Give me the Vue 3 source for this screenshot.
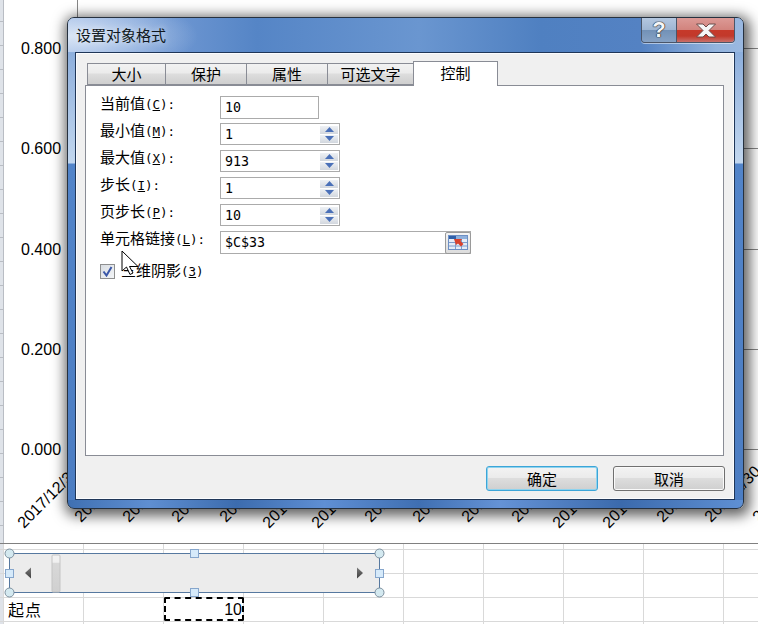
<template>
  <div class="page">
    <div class="chart">
      <div class="axis"></div>
      <template v-for="tick in ticks" :key="tick.text">
        <span class="y-label" :style="{ top: tick.y - 8 + 'px' }">{{ tick.text }}</span>
        <i class="grid-stub" :style="{ top: tick.y + 'px' }"></i>
      </template>
      <span
        v-for="item in dates"
        :key="item.x"
        class="x-label"
        :style="{ left: item.x + 8 + 'px', top: item.y - 13 + 'px' }"
      >{{ item.text }}</span>

      <div class="window">
        <div class="titlebar">
          <span class="title">设置对象格式</span>
          <div class="caption">
            <span class="help">?</span>
            <span class="close">
              <svg width="24" height="15" viewBox="0 0 24 15">
                <path d="M2.500 1h6.500l3 3 3-3h6.500l-6.500 6.500 6.500 6.500h-6.500l-3-3-3 3H2.500l6.500-6.500z" fill="#f6f6f6" stroke="#6b4a48" stroke-width="1" />
              </svg>
            </span>
          </div>
        </div>

        <div class="client">
          <div class="tabs">
            <div
              v-for="tab in tabs"
              :key="tab.name"
              class="tab"
              :class="{ active: tab.active }"
              :style="{ width: tab.width + 'px' }"
            >{{ tab.name }}</div>
          </div>

          <div class="panel">
            <div v-for="row in rows" :key="row.name" class="row">
              <span class="label">{{ row.name }}<span class="latin">(<u>{{ row.key }}</u>):</span></span>
              <div class="input" :class="row.kind">
                <span class="value">{{ row.value }}</span>
                <div v-if="row.kind === 'spin'" class="spinner">
                  <span class="spin-btn">
                    <svg width="9" height="5" viewBox="0 0 9 5"><path d="M4.500 0L9 5H0z" fill="#4a70b8" /></svg>
                  </span>
                  <span class="spin-btn">
                    <svg width="9" height="5" viewBox="0 0 9 5"><path d="M0 0h9L4.500 5z" fill="#4a70b8" /></svg>
                  </span>
                </div>
                <span v-if="row.kind === 'link'" class="picker">
                  <svg width="20" height="15" viewBox="0 0 20 15">
                    <rect x="0.500" y="0.500" width="19" height="14" fill="#e4ecf7" stroke="#6d8fc4" />
                    <rect x="1" y="1" width="7" height="3" fill="#2f5fa8" />
                    <rect x="8" y="1" width="11" height="3" fill="#8fb0dc" />
                    <path d="M1 7.500h18M1 11h18M7.500 4v10M13.500 4v10" stroke="#7d9ccb" fill="none" />
                    <path d="M6 4l8 0-1.500 2 3 3-2.500 2.500-3-3-2 1.500z" fill="#d8412c" />
                  </svg>
                </span>
              </div>
            </div>

            <div class="check-row">
              <span class="checkbox">
                <svg width="11" height="11" viewBox="0 0 11 11">
                  <path d="M1.500 5.500l3 4L9.500 1" fill="none" stroke="#3a57a8" stroke-width="2" />
                </svg>
              </span>
              <span class="label">三维阴影<span class="latin">(<u>3</u>)</span></span>
            </div>
          </div>

          <div class="footer">
            <button class="btn default">确定</button>
            <button class="btn">取消</button>
          </div>
        </div>
      </div>

      <svg class="cursor" width="20" height="26" viewBox="0 0 20 26">
        <path d="M1 1v20l4.500-4 3.500 7.500 3-1.500-3.500-6.500h8.500z" fill="#fff" stroke="#000" />
      </svg>
    </div>

    <div class="sheet">
      <svg class="scroll-object" width="390" height="56" viewBox="0 0 390 56">
        <rect x="9.500" y="9.500" width="370" height="39" fill="#ececec" stroke="#56789f" />
        <rect x="52" y="11" width="8" height="37" rx="1" fill="url(#thumb)" stroke="#c4c4c4" />
        <defs>
          <linearGradient id="thumb" x1="0" y1="0" x2="0" y2="1">
            <stop offset="0" stop-color="#f2f2f2" />
            <stop offset="0.200" stop-color="#f0f0f0" />
            <stop offset="0.210" stop-color="#d8d8d8" />
            <stop offset="1" stop-color="#d0d0d0" />
          </linearGradient>
          <linearGradient id="arrow" x1="0" y1="0" x2="0" y2="1">
            <stop offset="0" stop-color="#7a7a7a" />
            <stop offset="1" stop-color="#3f3f3f" />
          </linearGradient>
        </defs>
        <path d="M25 29l6-5.500v11z" fill="url(#arrow)" />
        <path d="M363 29l-6-5.500v11z" fill="url(#arrow)" />
        <g fill="#d4e9f0" stroke="#7c8f9e">
          <circle cx="9.500" cy="9.500" r="4.500" />
          <circle cx="379.500" cy="9.500" r="4.500" />
          <circle cx="9.500" cy="48.500" r="4.500" />
          <circle cx="379.500" cy="48.500" r="4.500" />
        </g>
        <g fill="#d6eafa" stroke="#86a6cc">
          <rect x="190.500" y="5.500" width="8" height="8" />
          <rect x="5.500" y="25.500" width="8" height="8" />
          <rect x="375.500" y="25.500" width="8" height="8" />
          <rect x="190.500" y="44.500" width="8" height="8" />
        </g>
      </svg>

      <div class="cells">
        <span class="cell name">起点</span>
        <span class="cell"></span>
        <span class="cell number">10</span>
      </div>
    </div>
  </div>
</template>

<script setup>
const ticks = [
  { text: "0.800", y: 48 },
  { text: "0.600", y: 148 },
  { text: "0.400", y: 249 },
  { text: "0.200", y: 349 },
  { text: "0.000", y: 449 },
];

const short = "2018/1/30";
const long = "2017/12/30";
const dates = [
  { x: 18, y: 528, text: long },
  { x: 75, y: 522, text: short },
  { x: 123, y: 522, text: short },
  { x: 172, y: 522, text: short },
  { x: 220, y: 522, text: short },
  { x: 263, y: 528, text: long },
  { x: 312, y: 528, text: long },
  { x: 365, y: 522, text: short },
  { x: 413, y: 522, text: short },
  { x: 462, y: 522, text: short },
  { x: 512, y: 522, text: short },
  { x: 553, y: 528, text: long },
  { x: 603, y: 528, text: long },
  { x: 657, y: 522, text: short },
  { x: 705, y: 522, text: short },
  { x: 753, y: 522, text: short },
];

const tabs = [
  { name: "大小", width: 78 },
  { name: "保护", width: 81 },
  { name: "属性", width: 81 },
  { name: "可选文字", width: 86 },
  { name: "控制", width: 85, active: true },
];

const rows = [
  { name: "当前值", key: "C", value: "10", kind: "plain" },
  { name: "最小值", key: "M", value: "1", kind: "spin" },
  { name: "最大值", key: "X", value: "913", kind: "spin" },
  { name: "步长", key: "I", value: "1", kind: "spin" },
  { name: "页步长", key: "P", value: "10", kind: "spin" },
  { name: "单元格链接", key: "L", value: "$C$33", kind: "link" },
];
</script>

<style scoped>
.page {
  width: 758px;
  height: 624px;
  overflow: hidden;
  display: flex;
  flex-direction: column;
  background:
    linear-gradient(#b9bdc4, #b9bdc4) 3px 0 / 1px 100% no-repeat,
    linear-gradient(#dfe3e9 21px, #b9bdc4 21px, #b9bdc4 22px, #dfe3e9 22px) 0 0 / 3px 24px repeat-y,
    #fff;
}
.chart {
  position: relative;
  height: 543px;
  flex: none;
}
.axis {
  position: absolute;
  left: 77px;
  top: 0;
  width: 1px;
  height: 450px;
  background: #868686;
}
.y-label {
  position: absolute;
  left: 21px;
  font: 16px/18px "Liberation Sans", Arial, sans-serif;
  color: #000;
}
.grid-stub {
  position: absolute;
  left: 700px;
  right: 0;
  height: 1px;
  background: #868686;
}
.x-label {
  position: absolute;
  font: 16px/16px "Liberation Sans", Arial, sans-serif;
  color: #000;
  white-space: nowrap;
  transform-origin: 0 100%;
  transform: rotate(-45deg);
}

.window {
  position: absolute;
  left: 67px;
  top: 17px;
  width: 677px;
  height: 492px;
  box-sizing: border-box;
  display: flex;
  flex-direction: column;
  padding: 0 8px 8px 7px;
  border: 1px solid #26313f;
  border-radius: 7px;
  box-shadow: 2px 3px 13px 4px rgba(0, 0, 0, 0.62);
  background:
    linear-gradient(90deg, #3f70b2, #5f8fd2 12%, #3c6cae 25%, #5f8fd4 38%, #3f6fb2 52%, #6593d6 64%, #3b6aac 82%, #5f90d4) 0 100% / 100% 8px no-repeat,
    linear-gradient(#7ba3d8 0, #9ab8e0 60px, #c2d7ef 145px, #5284c9 146px, #4c7dc2 100%);
}
.titlebar {
  height: 34px;
  margin: 0 -8px 0 -7px;
  padding: 0 8px 0 8px;
  display: flex;
  justify-content: space-between;
  align-items: flex-start;
  border-radius: 6px 6px 0 0;
  background:
    radial-gradient(ellipse 130px 40px at 0 18px, rgba(226, 236, 248, 0.9), rgba(226, 236, 248, 0)),
    linear-gradient(90deg, #8cace0, #5585c6 28%, #6a96d0 52%, #4f80c1 70%, #5482c3 85%, #93b4de 96%, #9ab8e0);
}
.title {
  margin-top: 7px;
  font: 15px/20px "Noto Sans CJK SC", sans-serif;
  color: #101820;
  text-shadow: 0 0 6px rgba(255, 255, 255, 0.75);
}
.caption {
  display: flex;
  height: 24px;
  border: 1px solid #4a5568;
  border-top: 0;
  border-radius: 0 0 4px 4px;
  overflow: hidden;
  box-shadow: 0 1px 0 rgba(255, 255, 255, 0.5);
}
.help {
  width: 34px;
  text-align: center;
  font: bold 22px/24px "Liberation Sans", Arial, sans-serif;
  color: #f6f6f8;
  text-shadow: 0 0 1px #222, 0 0 1px #222, 0 0 1px #222;
  border-right: 1px solid #4a5568;
  background: linear-gradient(#b4c7e0, #9fb6d3 48%, #7291b6 50%, #86a2c5);
}
.close {
  width: 57px;
  display: flex;
  align-items: center;
  justify-content: center;
  background: linear-gradient(#dc9a96, #d2847e 48%, #c6392a 52%, #c2392b 75%, #c9706a);
}
.client {
  flex: 1;
  min-height: 0;
  display: flex;
  flex-direction: column;
  padding: 8px 10px 0 9px;
  background: #f0f0f0;
  border: 1px solid #1f3658;
  box-shadow: inset 0 0 0 1px #fbfcfe;
}
.tabs {
  position: relative;
  z-index: 1;
  display: flex;
  height: 25px;
  margin: 0 0 -1px 2px;
  align-items: flex-start;
  flex: none;
}
.tab {
  box-sizing: border-box;
  height: 22px;
  margin-top: 2px;
  border: 1px solid #898c95;
  border-right: 0;
  text-align: center;
  font: 15px/19px "Noto Sans CJK SC", sans-serif;
  color: #000;
  background: linear-gradient(#f2f2f2, #ebebeb 45%, #dddddd 50%, #cfcfcf);
}
.tab.active {
  height: 25px;
  margin-top: 0;
  border-right: 1px solid #898c95;
  border-bottom: 0;
  background: #fff;
  line-height: 21px;
}
.panel {
  flex: 1;
  min-height: 0;
  box-sizing: border-box;
  display: flex;
  flex-direction: column;
  gap: 4px;
  padding: 10px 0 0 14px;
  background: #fff;
  border: 1px solid #898c95;
}
.row {
  display: grid;
  grid-template-columns: 120px auto;
  justify-content: start;
  height: 23px;
  align-items: start;
}
.label {
  font: 15px/16px "Noto Sans CJK SC", sans-serif;
  color: #000;
  white-space: nowrap;
  margin-top: -1px;
}
.latin {
  font: 12.5px/16px "DejaVu Sans Mono", "Liberation Mono", monospace;
}
.input {
  box-sizing: border-box;
  display: flex;
  align-items: center;
  justify-content: space-between;
  border: 1px solid #ababab;
  background: #fff;
}
.input.plain {
  width: 99px;
  height: 23px;
}
.input.spin {
  width: 120px;
  height: 22px;
}
.input.link {
  width: 251px;
  height: 23px;
}
.value {
  padding: 1px 0 0 4px;
  font: 13.3px/16px "DejaVu Sans Mono", "Liberation Mono", monospace;
  color: #000;
}
.spinner {
  display: flex;
  flex-direction: column;
  gap: 1px;
  margin-right: 1px;
}
.spin-btn {
  width: 18px;
  height: 8px;
  display: flex;
  align-items: center;
  justify-content: center;
  background: linear-gradient(#eef1f5, #d2d7de);
}
.picker {
  box-sizing: border-box;
  width: 26px;
  height: 22px;
  margin-right: -1px;
  display: flex;
  align-items: center;
  justify-content: center;
  border: 1px solid #9a9a9a;
  border-radius: 2px;
  background: linear-gradient(#f4f4f4, #dcdcdc);
}
.check-row {
  display: flex;
  align-items: center;
  gap: 6px;
  margin-top: 5px;
}
.checkbox {
  box-sizing: border-box;
  width: 15px;
  height: 15px;
  display: flex;
  align-items: center;
  justify-content: center;
  border: 1px solid #8e8f8f;
  background: linear-gradient(135deg, #d9dde2, #f3f5f7);
}
.footer {
  flex: none;
  display: flex;
  justify-content: flex-end;
  gap: 15px;
  height: 43px;
  box-sizing: border-box;
  padding-top: 10px;
  margin-right: -1px;
}
.btn {
  width: 112px;
  height: 25px;
  padding: 0;
  border: 1px solid #707070;
  border-radius: 3px;
  font: 15px/21px "Noto Sans CJK SC", sans-serif;
  color: #000;
  background: linear-gradient(#f3f3f3, #ebebeb 47%, #dddddd 50%, #cfcfcf);
  box-shadow: inset 0 0 0 1px #fafafa;
}
.btn.default {
  border-color: #3ca5d8;
  box-shadow: inset 0 0 0 1px #8fd3ee;
}
.cursor {
  position: absolute;
  left: 121px;
  top: 250px;
}

.sheet {
  position: relative;
  flex: 1;
  border-top: 1px solid #808080;
  background:
    linear-gradient(90deg, #d9d9d9 1px, transparent 1px) 3px 0 / 80px 100% repeat-x,
    linear-gradient(#d9d9d9 1px, transparent 1px) 0 5px / 100% 24px repeat-y;
}
.scroll-object {
  position: absolute;
  left: 0;
  top: 0;
}
.cells {
  display: grid;
  grid-template-columns: repeat(3, 80px);
  margin: 53px 0 0 4px;
  height: 24px;
}
.cell {
  box-sizing: border-box;
  height: 24px;
}
.name {
  padding-left: 4px;
  letter-spacing: 1px;
  font: 16px/25px "Noto Sans CJK SC", sans-serif;
  color: #000;
}
.number {
  text-align: right;
  border: 2px dashed #000;
  border-radius: 2px;
  padding-top: 1px;
  font: 16px/20px "Liberation Sans", Arial, sans-serif;
  color: #000;
}
</style>
